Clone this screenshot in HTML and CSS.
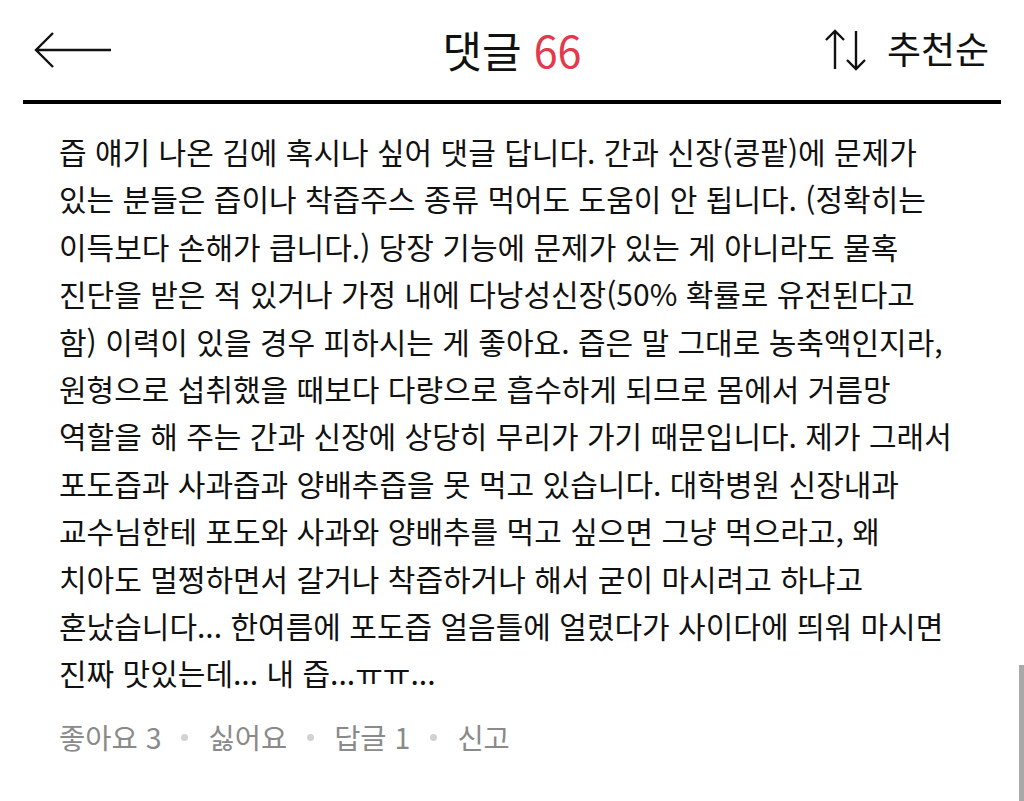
FILE: index.html
```html
<!DOCTYPE html>
<html lang="ko">
<head>
<meta charset="utf-8">
<link rel="stylesheet" href="styles.css">
</head>
<body>
<header class="top">
  <div class="bar">
    <span class="back">
      <svg width="80" height="40" viewBox="0 0 80 40"><path d="M19 3 L2 20 L19 37 M2 20 H77" fill="none" stroke="#111" stroke-width="2.4"/></svg>
    </span>
    <h1 class="title">댓글 <span class="count">66</span></h1>
    <span class="sort">
      <svg width="42" height="42" viewBox="0 0 42 42"><path d="M10 2 V40 M1 11 L10 2 L19 11 M31 2 V40 M22 31 L31 40 L40 31" fill="none" stroke="#111" stroke-width="2.4"/></svg>
      <span class="sort-label">추천순</span>
    </span>
  </div>
</header>
<main class="comment">
  <p class="body">즙 얘기 나온 김에 혹시나 싶어 댓글 답니다. 간과 신장(콩팥)에 문제가<br>있는 분들은 즙이나 착즙주스 종류 먹어도 도움이 안 됩니다. (정확히는<br>이득보다 손해가 큽니다.) 당장 기능에 문제가 있는 게 아니라도 물혹<br>진단을 받은 적 있거나 가정 내에 다낭성신장(50% 확률로 유전된다고<br>함) 이력이 있을 경우 피하시는 게 좋아요. 즙은 말 그대로 농축액인지라,<br>원형으로 섭취했을 때보다 다량으로 흡수하게 되므로 몸에서 거름망<br>역할을 해 주는 간과 신장에 상당히 무리가 가기 때문입니다. 제가 그래서<br>포도즙과 사과즙과 양배추즙을 못 먹고 있습니다. 대학병원 신장내과<br>교수님한테 포도와 사과와 양배추를 먹고 싶으면 그냥 먹으라고, 왜<br>치아도 멀쩡하면서 갈거나 착즙하거나 해서 굳이 마시려고 하냐고<br>혼났습니다... 한여름에 포도즙 얼음틀에 얼렸다가 사이다에 띄워 마시면<br>진짜 맛있는데... 내 즙...ㅠㅠ...</p>
  <div class="actions">
    <span>좋아요 3</span><span class="dot"></span><span>싫어요</span><span class="dot"></span><span>답글 1</span><span class="dot"></span><span>신고</span>
  </div>
</main>
<div class="scroll"></div>
</body>
</html>
```
FILE: styles.css
```css
html, body {
  margin: 0;
  padding: 0;
  background: #fff;
}
body {
  font-family: "Noto Sans CJK KR", "Noto Sans", sans-serif;
  color: #111;
  width: 1024px;
  height: 801px;
  overflow: hidden;
  position: relative;
}
.top {
  padding: 0 23px;
}
.bar {
  height: 100px;
  border-bottom: 4px solid #000;
  display: flex;
  align-items: center;
  justify-content: space-between;
  position: relative;
}
.back {
  display: flex;
  margin-left: 11px;
}
.back svg { display: block; }
.title {
  position: absolute;
  left: 0;
  right: 0;
  text-align: center;
  margin: 0;
  font-size: 43px;
  font-weight: 400;
  line-height: 1;
  top: 28px;
  pointer-events: none;
}
.count {
  color: #e3394b;
}
.sort {
  display: flex;
  align-items: center;
  gap: 20px;
  margin-right: 12px;
}
.sort svg { display: block; }
.sort-label {
  font-size: 37px;
  line-height: 1;
  margin-top: -4px;
}
.comment {
  padding: 24px 0 0 59px;
}
.body {
  margin: 0;
  font-size: 30px;
  line-height: 47.4px;
  color: #111;
}
.actions {
  margin-top: 26px;
  display: flex;
  align-items: center;
  font-size: 28.5px;
  color: #8a8a8a;
  line-height: 1;
}
.dot {
  width: 7px;
  height: 7px;
  border-radius: 50%;
  background: #d2d2d2;
  margin: 0 20px;
}
.scroll {
  position: absolute;
  right: 0;
  top: 665px;
  width: 5px;
  bottom: 0;
  background: #a9a9a9;
}
```
